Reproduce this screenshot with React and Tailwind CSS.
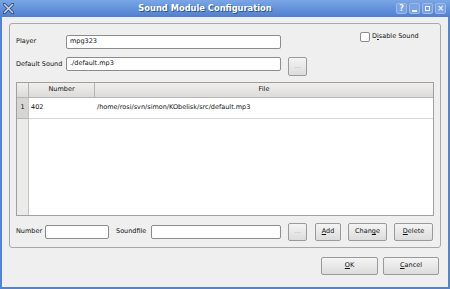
import React from "react";

const font = { fontFamily: '"DejaVu Sans", "Liberation Sans", sans-serif' };

function Btn({ className = "", children, disabled }) {
  return (
    <div
      className={`flex items-center justify-center rounded-[2px] border border-[#9a9a9a] bg-gradient-to-b from-[#f4f4f4] to-[#dcdcdc] text-[6.5px] ${
        disabled ? "text-[#b0b0b0]" : "text-[#111]"
      } ${className}`}
    >
      {children}
    </div>
  );
}

function Field({ className = "", children }) {
  return (
    <div
      className={`flex items-center rounded-[2px] border border-[#8c8c8c] bg-white pl-[3px] text-[6.5px] text-[#111] ${className}`}
    >
      {children}
    </div>
  );
}

function TitleButton({ children }) {
  return (
    <div className="flex h-[11px] w-[11px] items-center justify-center rounded-[2px] border border-[#9dbbea] bg-[#79a3e3] text-[8px] font-bold leading-none text-[#eef3fb]">
      {children}
    </div>
  );
}

export default function App() {
  return (
    <div
      className="flex h-[289px] w-[450px] flex-col bg-[#5584cf]"
      style={font}
    >
      {/* barre de titre */}
      <div className="relative flex h-[17px] items-center bg-gradient-to-b from-[#7aa6e6] to-[#4f7fcf] px-[3px]">
        <svg width="11" height="11" viewBox="0 0 11 11">
          <path
            d="M1 1 L10 10 M10 1 L1 10"
            stroke="#2c4a80"
            strokeWidth="3.2"
            strokeLinecap="round"
          />
          <path
            d="M1.5 1.5 L9.5 9.5 M9.5 1.5 L1.5 9.5"
            stroke="#c9d6ea"
            strokeWidth="1.6"
            strokeLinecap="round"
          />
        </svg>
        <div className="flex-1 text-center text-[8.3px] font-bold text-white [text-shadow:1px_1px_0_#2e5596]">
          Sound Module Configuration
        </div>
        <div className="flex gap-[2px] pr-[1px]">
          <TitleButton>?</TitleButton>
          <TitleButton>
            <span className="mt-[4px] block h-[2px] w-[5px] bg-[#eef3fb]" />
          </TitleButton>
          <TitleButton>
            <span className="block h-[5px] w-[5px] border border-[#eef3fb]" />
          </TitleButton>
          <TitleButton>×</TitleButton>
        </div>
      </div>

      {/* contenu */}
      <div className="mx-[2px] mb-[2px] flex flex-1 flex-col bg-[#efefef] px-[7px] pt-[6px] text-[6.5px] text-[#111]">
        <div className="flex flex-col rounded-[3px] border border-[#a8a8a8] px-[6px] pb-[6px] pt-[8px]">
          <div className="flex h-[16px] items-start">
            <div className="mt-[3px] flex items-center">
              <span className="w-[50px]">Player</span>
              <Field className="h-[14px] w-[215px]">mpg323</Field>
            </div>
            <div className="ml-[79px] flex items-center gap-[2px]">
              <div className="h-[10px] w-[10px] rounded-[2px] border border-[#8c8c8c] bg-white" />
              <span>
                D<span className="underline">i</span>sable Sound
              </span>
            </div>
          </div>

          <div className="mt-[9px] flex h-[19px] items-start">
            <span className="mt-[3px] w-[50px]">Default Sound</span>
            <Field className="h-[14px] w-[215px]">./default.mp3</Field>
            <Btn disabled className="ml-[7px] h-[19px] w-[19px]">
              ...
            </Btn>
          </div>

          {/* tableau */}
          <div className="mt-[6px] flex h-[134px] flex-col border border-[#a0a0a0] bg-white">
            <div className="flex h-[15px] border-b border-[#b4b4b4] bg-gradient-to-b from-[#f0efee] to-[#dddbd9]">
              <div className="w-[12px] border-r border-[#b4b4b4]" />
              <div className="flex w-[66px] items-center justify-center border-r border-[#b4b4b4]">
                Number
              </div>
              <div className="flex flex-1 items-center justify-center">
                File
              </div>
            </div>
            <div className="flex flex-1">
              <div className="flex w-[12px] flex-col border-r border-[#c4c4c4] bg-[#ebebea]">
                <div className="flex h-[21px] items-center justify-center border-b border-[#b4b4b4] bg-[#d6d5d3]">
                  1
                </div>
              </div>
              <div className="flex flex-1 flex-col">
                <div className="flex h-[21px] items-center border-b border-[#d8d8d8]">
                  <span className="w-[66px] pl-[2px]">402</span>
                  <span className="pl-[2px]">
                    /home/rosi/svn/simon/KObelisk/src/default.mp3
                  </span>
                </div>
              </div>
            </div>
          </div>

          {/* ligne du bas */}
          <div className="mt-[7px] flex h-[18px] items-center">
            <span className="w-[29px]">Number</span>
            <Field className="h-[14px] w-[64px]" />
            <span className="ml-[7px] w-[35px]">Soundfile</span>
            <Field className="h-[14px] w-[130px]" />
            <Btn disabled className="ml-[7px] h-[18px] w-[19px]">
              ...
            </Btn>
            <Btn className="ml-[8px] h-[18px] w-[26px]">
              <span className="underline">A</span>dd
            </Btn>
            <Btn className="ml-[7px] h-[18px] w-[39px]">
              Chan<span className="underline">g</span>e
            </Btn>
            <Btn className="ml-[7px] h-[18px] w-[39px]">
              <span className="underline">D</span>elete
            </Btn>
          </div>
        </div>

        <div className="mt-[9px] flex justify-end gap-[5px] pr-[2px]">
          <Btn className="h-[18px] w-[57px]">
            <span className="underline">O</span>K
          </Btn>
          <Btn className="h-[18px] w-[56px]">
            <span className="underline">C</span>ancel
          </Btn>
        </div>
      </div>
    </div>
  );
}
